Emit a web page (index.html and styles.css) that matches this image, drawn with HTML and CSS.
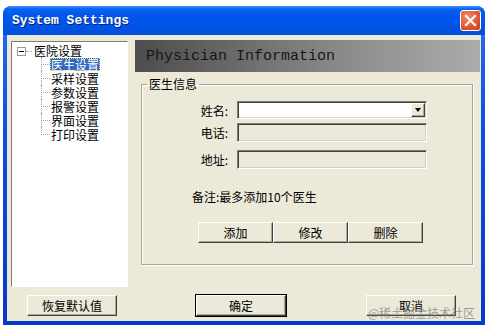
FILE: index.html
```html
<!DOCTYPE html>
<html lang="zh-CN">
<head>
    <meta charset="UTF-8">
    <title>System Settings</title>
    <link rel="stylesheet" href="styles.css">
</head>
<body>
    <div class="window">
        <div class="titlebar">
            <span class="title">System Settings</span>
            <span class="close">
                <svg width="13" height="13" viewBox="0 0 13 13">
                    <path d="M2 2 L11 11 M11 2 L2 11" stroke="#fff" stroke-width="2.2" stroke-linecap="square"/>
                </svg>
            </span>
        </div>

        <div class="content">
            <div class="main">
                <!-- left tree -->
                <div class="tree">
                    <div class="root">
                        <span class="toggle"></span>
                        <span class="root-line"></span>
                        <span class="node-text">医院设置</span>
                    </div>
                    <ul class="children">
                        <li><span class="node-text selected">医生设置</span></li>
                        <li><span class="node-text">采样设置</span></li>
                        <li><span class="node-text">参数设置</span></li>
                        <li><span class="node-text">报警设置</span></li>
                        <li><span class="node-text">界面设置</span></li>
                        <li><span class="node-text">打印设置</span></li>
                    </ul>
                </div>

                <!-- right panel -->
                <div class="panel">
                    <div class="panel-header">Physician Information</div>
                    <fieldset class="group">
                        <legend>医生信息</legend>
                        <div class="form-row">
                            <label>姓名:</label>
                            <div class="combo">
                                <span class="combo-btn"><span class="arrow"></span></span>
                            </div>
                        </div>
                        <div class="form-row">
                            <label>电话:</label>
                            <div class="field disabled"></div>
                        </div>
                        <div class="form-row address">
                            <label>地址:</label>
                            <div class="field disabled"></div>
                        </div>
                        <p class="note">备注:最多添加10个医生</p>
                        <div class="actions">
                            <button class="btn">添加</button>
                            <button class="btn">修改</button>
                            <button class="btn">删除</button>
                        </div>
                    </fieldset>
                </div>
            </div>

            <div class="footer">
                <button class="btn wide reset">恢复默认值</button>
                <button class="btn wide default ok">确定</button>
                <button class="btn wide cancel">取消</button>
            </div>
            <span class="watermark">@稀土掘金技术社区</span>
        </div>
    </div>
</body>
</html>
```

FILE: styles.css
```css
:root {
    --face: #ECE9D8;
    --dark: #404040;
    --select: #316AC5;
    --cjk: "Noto Sans CJK SC", "Liberation Sans", sans-serif;
}

* {
    margin: 0;
    padding: 0;
    box-sizing: border-box;
}

body {
    background: #fff;
    font-family: var(--cjk);
    font-size: 12px;
    color: #000;
}

.window {
    margin: 6px 0 0 3px;
    width: 482px;
    height: 319px;
    padding: 0 4px 4px;
    background: linear-gradient(to bottom, #2a6cf0, #0a4fe0 40%, #0838c8);
    border-radius: 8px 8px 0 0;
}

.titlebar {
    height: 29px;
    display: flex;
    align-items: center;
    justify-content: space-between;
    margin: 0 -4px;
    padding: 0 4px 0 9px;
    border-radius: 8px 8px 0 0;
    background: linear-gradient(to bottom, #3d95ff 0, #0a62f0 3px, #0058ee 8px, #0055e8 60%, #0050dc 100%);
}

.title {
    font-family: "Liberation Mono", monospace;
    font-weight: bold;
    font-size: 13px;
    color: #fff;
    text-shadow: 1px 1px 0 #0a1f7a;
}

.close {
    width: 21px;
    height: 21px;
    display: flex;
    align-items: center;
    justify-content: center;
    border: 1px solid #fff;
    border-radius: 3px;
    background: radial-gradient(circle at 35% 30%, #f08a6a, #e0552c 60%, #c8401c);
}

.content {
    position: relative;
    height: 286px;
    padding: 5px 1px 0 4px;
    background: var(--face);
}

.main {
    display: flex;
    gap: 7px;
}

/* tree view */
.tree {
    width: 117px;
    height: 246px;
    margin-top: 1px;
    background: #fff;
    border: 1px solid;
    border-color: #7f7d73 #fff #fff #7f7d73;
}

.root {
    display: flex;
    align-items: center;
    height: 14px;
    padding-left: 5px;
    margin-top: 1px;
}

.toggle {
    width: 9px;
    height: 9px;
    border: 1px solid #919b9c;
    background: #fff;
    position: relative;
    margin-top: 3px;
}

.toggle::after {
    content: "";
    position: absolute;
    left: 1px;
    top: 3px;
    width: 5px;
    height: 1px;
    background: #000;
}

.root-line {
    width: 6px;
    border-top: 1px dotted #a0a0a0;
    margin: 3px 1px 0 0;
}

.node-text {
    display: inline-block;
    line-height: 13px;
    padding: 0 1px;
    white-space: nowrap;
}

.node-text.selected {
    background: var(--select);
    color: #fff;
    outline: 1px dotted #e8d878;
    outline-offset: -1px;
}

.children {
    list-style: none;
    margin-left: 29px;
}

.children li {
    position: relative;
    height: 14px;
    line-height: 14px;
    padding: 1px 0 0 9px;
}

.children li::before {
    content: "";
    position: absolute;
    left: 0;
    top: 0;
    width: 8px;
    height: 7px;
    border-left: 1px dotted #a0a0a0;
    border-bottom: 1px dotted #a0a0a0;
}

.children li::after {
    content: "";
    position: absolute;
    left: 0;
    top: 7px;
    bottom: 0;
    border-left: 1px dotted #a0a0a0;
}

.children li:last-child::after {
    display: none;
}

/* right panel */
.panel {
    width: 345px;
}

.panel-header {
    height: 32px;
    padding-left: 11px;
    display: flex;
    align-items: center;
    background: linear-gradient(to right, #4c4c4c, #8a8a8a 60%, #acacac);
    font-family: "Liberation Mono", monospace;
    font-size: 15px;
    color: #161616;
}

.group {
    margin: 5px 7px 0 6px;
    height: 188px;
    padding: 0;
    border: 1px solid #a8a597;
    box-shadow: inset 1px 1px 0 #fff, 1px 1px 0 #fff;
}

.group legend {
    margin-left: 5px;
    padding: 0 2px;
    line-height: 14px;
}

.form-row {
    display: grid;
    grid-template-columns: 86px 190px;
    column-gap: 9px;
    align-items: center;
    margin-top: 4px;
}

.form-row:first-of-type {
    margin-top: 10px;
}

.form-row.address {
    margin-top: 8px;
}

.form-row label {
    text-align: right;
}

.combo,
.field {
    height: 19px;
    border: 1px solid;
    border-color: #7f7d73 #fff #fff #7f7d73;
    box-shadow: inset 1px 1px 0 #404040, inset -1px -1px 0 #d4d0c8;
}

.combo {
    height: 18px;
    background: #fff;
    display: flex;
    justify-content: flex-end;
    padding: 1px;
}

.field.disabled {
    background: var(--face);
}

.combo-btn {
    width: 14px;
    height: 14px;
    background: var(--face);
    border: 1px solid;
    border-color: #fff var(--dark) var(--dark) #fff;
    box-shadow: inset -1px -1px 0 #aca899;
    display: flex;
    align-items: center;
    justify-content: center;
}

.arrow {
    width: 0;
    height: 0;
    border-left: 3px solid transparent;
    border-right: 3px solid transparent;
    border-top: 4px solid #000;
}

.note {
    margin: 21px 0 0 50px;
    line-height: 14px;
}

.actions {
    display: flex;
    margin: 18px 0 0 56px;
}

/* buttons */
.btn {
    width: 75px;
    height: 21px;
    font-family: var(--cjk);
    font-size: 12px;
    background: var(--face);
    border: 1px solid;
    border-color: #fff var(--dark) var(--dark) #fff;
    box-shadow: inset -1px -1px 0 #aca899;
    color: #000;
}

.footer {
    display: flex;
    margin-top: 8px;
}

.btn.wide {
    width: 90px;
}

.reset {
    margin-left: 16px;
}

.ok {
    margin-left: 79px;
}

.cancel {
    margin-left: 80px;
}

.btn.default {
    outline: 1px solid #000;
    outline-offset: 0;
}

.watermark {
    position: absolute;
    right: 6px;
    bottom: 0;
    font-size: 12px;
    color: rgba(130, 130, 130, 0.75);
}
```
